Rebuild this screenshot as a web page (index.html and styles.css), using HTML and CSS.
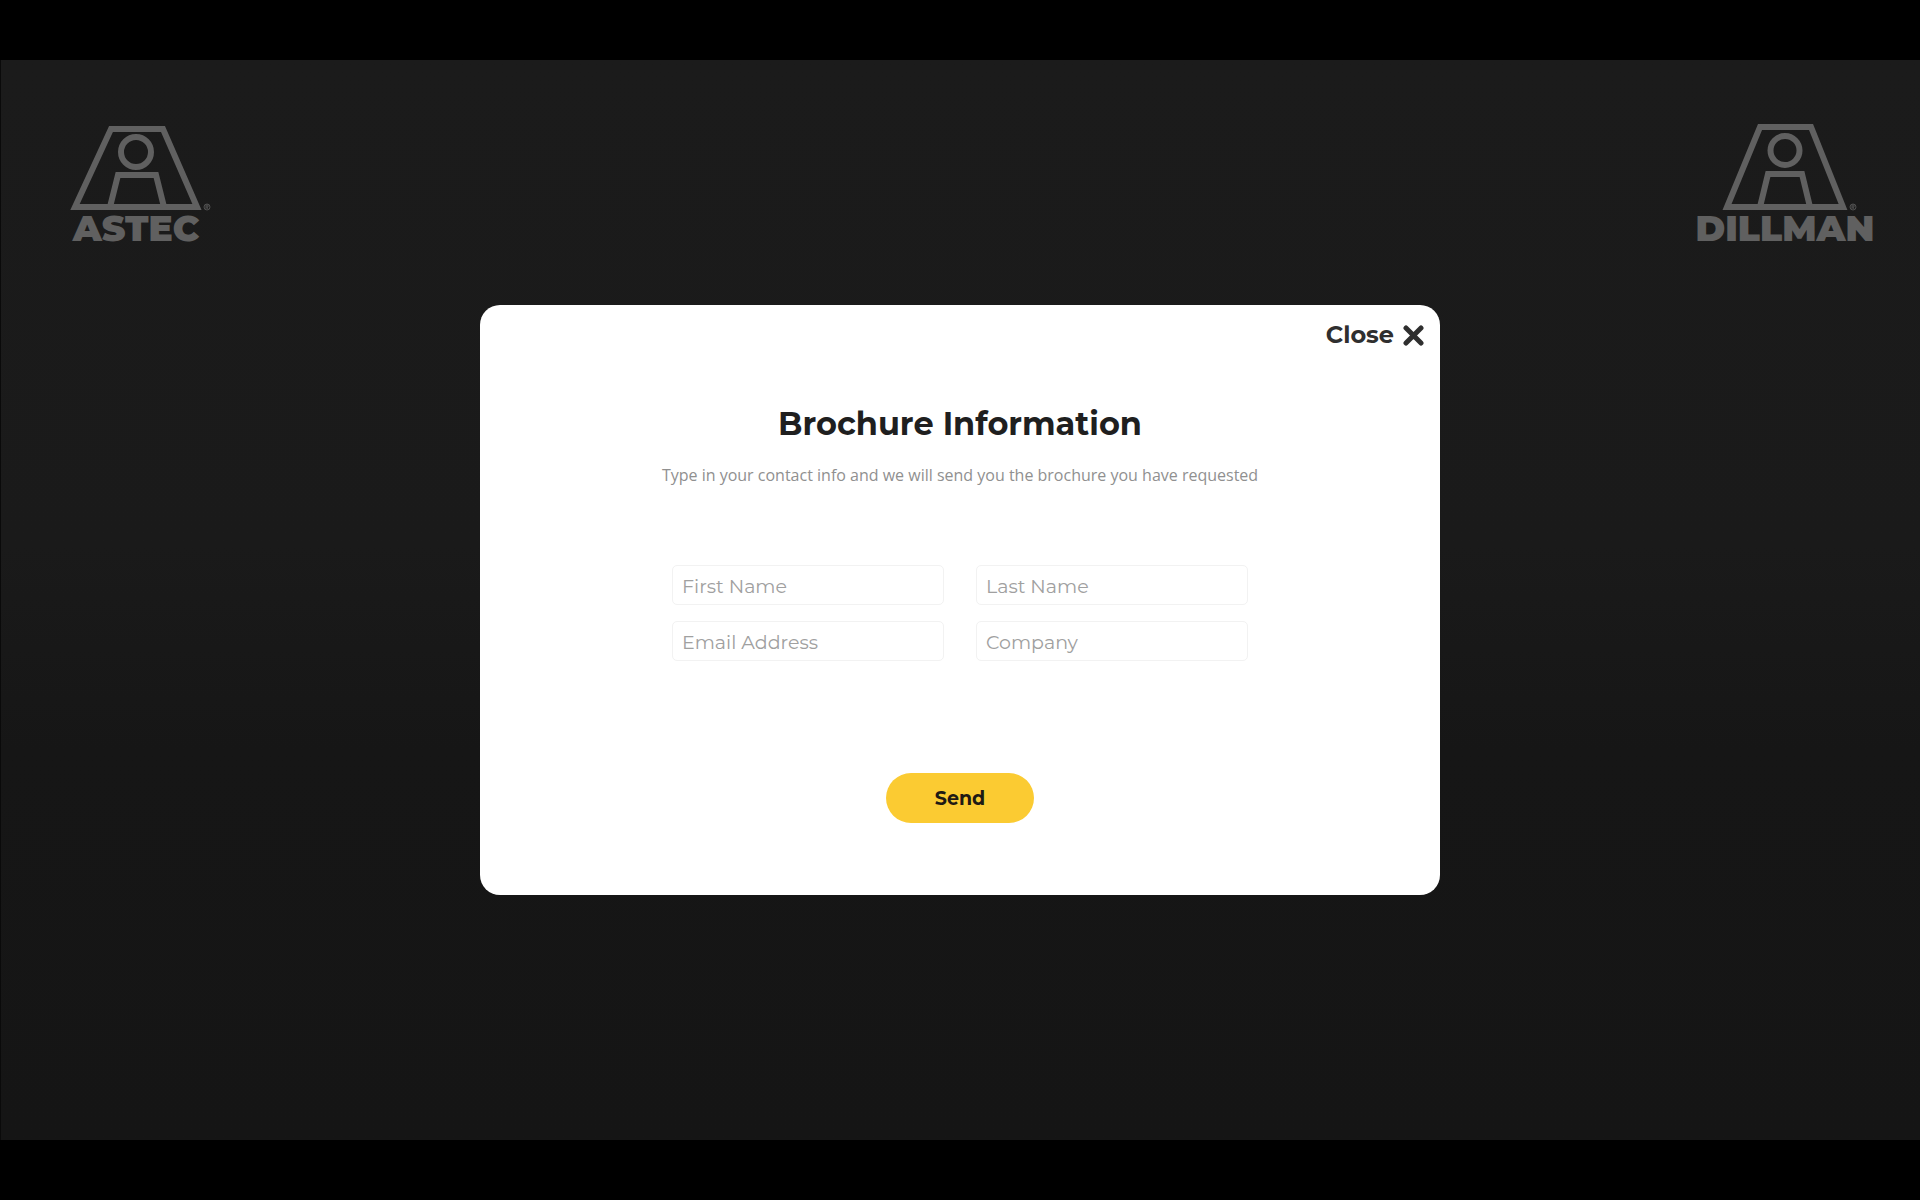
FILE: index.html
```html
<!DOCTYPE html>
<html lang="en">
<head>
<meta charset="utf-8">
<meta name="viewport" content="width=device-width, initial-scale=1">
<title>Brochure Information</title>
<link rel="stylesheet" href="styles.css">
</head>
<body>
<div class="page">
  <header class="brands">
    <div class="brand">
      <svg class="brand-mark" width="150" height="88" viewBox="0 0 150 88" aria-hidden="true">
        <path d="M50 5H102L136 83H14Z" class="mark-line"/>
        <circle cx="75" cy="28" r="15" class="mark-line"/>
        <path d="M49 83L57 51H95L103 83" class="mark-line"/>
        <circle cx="146" cy="83" r="3" class="mark-reg"/>
        <path d="M145 85V81H147V83H145M146 83L147 85" class="mark-reg"/>
      </svg>
      <span class="brand-name">ASTEC</span>
    </div>
    <div class="brand">
      <svg class="brand-mark" width="150" height="88" viewBox="0 0 150 88" aria-hidden="true">
        <path d="M50 3H101L133 83H17Z" class="mark-line"/>
        <circle cx="75" cy="26.500" r="14.500" class="mark-line"/>
        <path d="M50 83L58 50H92L100 83" class="mark-line"/>
        <circle cx="143" cy="83" r="3" class="mark-reg"/>
        <path d="M142 85V81H144V83H142M143 83L144 85" class="mark-reg"/>
      </svg>
      <span class="brand-name">DILLMAN</span>
    </div>
  </header>
</div>
<div class="overlay">
  <section class="modal" role="dialog" aria-modal="true" aria-labelledby="modal-title">
    <button class="close" type="button">Close
      <svg width="22" height="22" viewBox="0 0 22 22" aria-hidden="true"><path d="M4 4L19 19M19 4L4 19"/></svg>
    </button>
    <h1 class="title" id="modal-title">Brochure Information</h1>
    <p class="lead">Type in your contact info and we will send you the brochure you have requested</p>
    <form class="form">
      <div class="fields">
        <input class="field" type="text" aria-label="First Name" placeholder="First Name">
        <input class="field" type="text" aria-label="Last Name" placeholder="Last Name">
        <input class="field" type="email" aria-label="Email Address" placeholder="Email Address">
        <input class="field" type="text" aria-label="Company" placeholder="Company">
      </div>
      <button class="send" type="submit">Send</button>
    </form>
  </section>
</div>
</body>
</html>
```
FILE: styles.css
```css
* { box-sizing: border-box; }

body {
  margin: 0;
  min-height: 100vh;
  display: flex;
  background: #000;
  font-family: Montserrat, Inter, sans-serif;
  color: #1f1f1f;
}

.page {
  flex: 1;
  margin: 60px 0;
  border-left: 1px solid #0a0a0a;
  background: linear-gradient(#1b1b1b 0, #1a1a1a 45%, #161616 64%, #151515 100%);
}

.brands {
  display: flex;
  justify-content: space-between;
  padding: 64px 42px 0 42px;
}

.brand {
  width: 186px;
  display: flex;
  flex-direction: column;
  align-items: center;
  color: #606060;
}

.brand-mark { overflow: visible; }

.mark-line {
  fill: none;
  stroke: #606060;
  stroke-width: 6;
}

.mark-reg {
  fill: none;
  stroke: #505050;
  stroke-width: 1;
}

.brand-name {
  font-size: 36px;
  font-weight: 900;
  line-height: 32px;
}

.overlay {
  position: fixed;
  inset: 0;
  display: grid;
  place-items: center;
}

.modal {
  width: 50%;
  min-width: 640px;
  display: flex;
  flex-direction: column;
  align-items: center;
  padding: 16px 16px 72px;
  border-radius: 20px;
  background: #fff;
}

.close {
  align-self: flex-end;
  display: flex;
  align-items: center;
  gap: 8px;
  padding: 0;
  border: 0;
  background: none;
  color: #2f2f2f;
  font: inherit;
  font-size: 24px;
  font-weight: 700;
  line-height: 28px;
}

.close svg {
  fill: none;
  stroke: #2f2f2f;
  stroke-width: 5;
  stroke-linecap: round;
}

.title {
  margin: 53px 0 0;
  font-size: 32px;
  font-weight: 700;
  line-height: 44px;
}

.lead {
  margin: 17px 0 0;
  color: #909090;
  font-family: "Open Sans", sans-serif;
  font-size: 16px;
  line-height: 24px;
}

.form {
  display: flex;
  flex-direction: column;
  align-items: center;
  width: 576px;
}

.fields {
  display: grid;
  grid-template-columns: 1fr 1fr;
  gap: 16px 32px;
  width: 100%;
  margin: 78px 0 112px;
}

.field {
  width: 100%;
  height: 40px;
  padding: 2px 9px 0;
  border: 1px solid #f2f2f2;
  border-radius: 5px;
  background: #fff;
  font: inherit;
  font-size: 19px;
}

.field::placeholder {
  color: #a0a0a0;
  opacity: 1;
}

.send {
  width: 148px;
  height: 50px;
  border: 0;
  border-radius: 25px;
  background: #fbcb32;
  color: #1f1a14;
  font: inherit;
  font-size: 19px;
  font-weight: 700;
}
```
